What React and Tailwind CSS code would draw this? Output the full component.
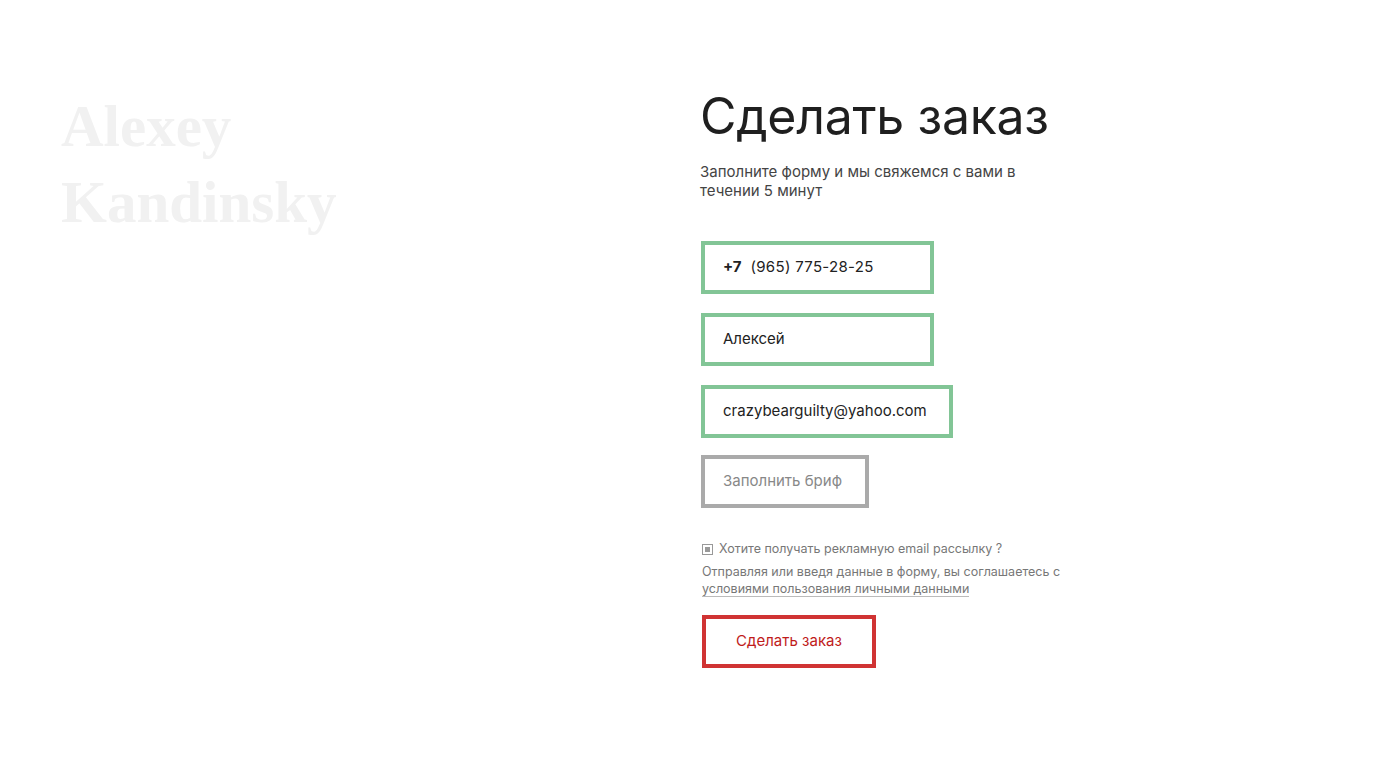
export default function App() {
  const green = 'border-[4px] border-[#82c596]'

  return (
    <div className="w-[1400px] h-[776px] bg-white flex font-['Inter','Noto_Sans',sans-serif]">
      {/* Ghost name */}
      <div className="w-[700px] pl-[61px] pt-[88px]">
        <div className="font-['Liberation_Serif','DejaVu_Serif',serif] font-bold text-[59px] leading-[76px] text-[#f1f1f1]">
          Alexey
          <br />
          Kandinsky
        </div>
      </div>

      {/* Form */}
      <div className="pt-[86px] flex flex-col">
        <h1 className="text-[50px] leading-[60px] text-[#1f1f1f] tracking-[-0.3px]">Сделать заказ</h1>
        <p className="mt-[16px] w-[340px] text-[15px] leading-[19px] text-[#444]">
          Заполните форму и мы свяжемся с вами в течении 5 минут
        </p>

        <div className="mt-[41px] ml-[1px] flex flex-col">
          <div className={`${green} w-[233px] h-[53px] flex items-center pl-[18px] text-[15px] text-[#222]`}>
            <span className="font-bold mr-[9px]">+7</span>
            <span className="tracking-[0.3px]">(965) 775-28-25</span>
          </div>
          <div className={`${green} mt-[19px] w-[233px] h-[53px] flex items-center pl-[18px] text-[15px] text-[#222]`}>
            Алексей
          </div>
          <div className={`${green} mt-[19px] w-[252px] h-[53px] flex items-center pl-[18px] text-[15px] text-[#222]`}>
            crazybearguilty@yahoo.com
          </div>
          <div className="mt-[17px] border-[4px] border-[#aaaaaa] w-[168px] h-[53px] flex items-center pl-[18px] text-[15px] text-[#888]">
            Заполнить бриф
          </div>
        </div>

        <div className="mt-[32px] ml-[2px] flex items-center gap-[6px] text-[12.5px] text-[#777]">
          <span className="w-[11px] h-[11px] border border-[#999] flex items-center justify-center">
            <span className="w-[5px] h-[5px] bg-[#999]" />
          </span>
          <span>Хотите получать рекламную email рассылку ?</span>
        </div>
        <div className="mt-[4px] ml-[2px] text-[12.5px] leading-[17px] text-[#777]">
          Отправляя или введя данные в форму, вы соглашаетесь с
          <br />
          <span className="border-b border-[#bbb]">условиями пользования личными данными</span>
        </div>

        <button className="mt-[18px] ml-[2px] w-[174px] h-[53px] border-[4px] border-[#d03333] text-[15px] text-[#c01b1b] flex items-center justify-center">
          Сделать заказ
        </button>
      </div>
    </div>
  )
}
